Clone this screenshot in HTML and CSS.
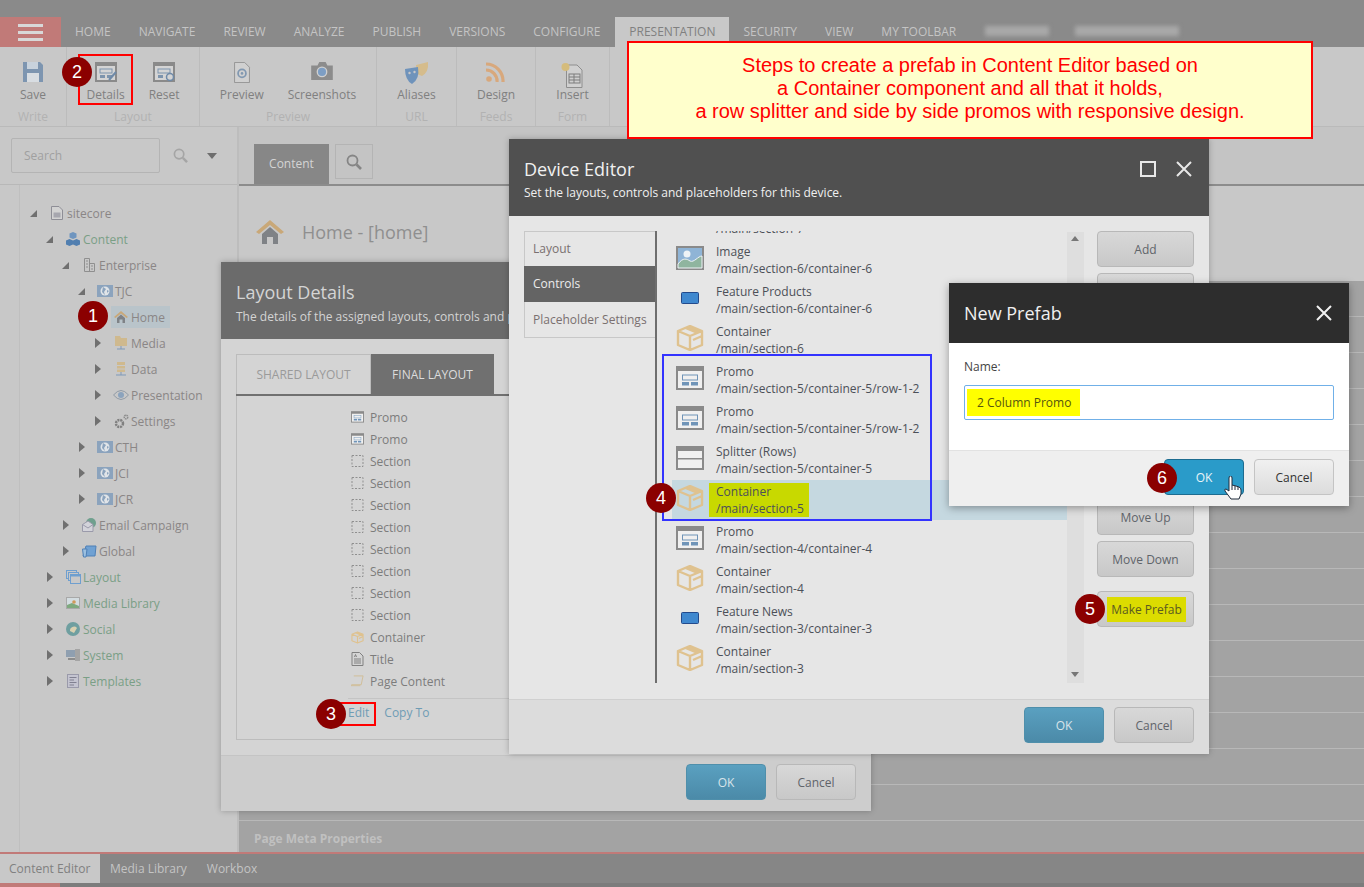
FILE: index.html
```html
<!DOCTYPE html>
<html>
<head>
  <title>Content Editor</title>
  <link rel="stylesheet" href="styles.css">
</head>
<body>
  <svg class="defs" width="0" height="0">
    <defs>
      <symbol id="i-promo" viewBox="0 0 28 24">
        <rect x="1" y="1" width="26" height="22" fill="#f0f0f0" stroke="#8a8a8a" stroke-width="2"/>
        <rect x="0" y="0" width="28" height="5" fill="#8a8a8a"/>
        <rect x="6.500" y="9" width="15" height="5" fill="none" stroke="#6f94b8" stroke-width="1"/>
        <rect x="6" y="16" width="7" height="3.500" fill="#6f94b8"/>
        <rect x="15" y="16" width="7" height="3.500" fill="#6f94b8"/>
      </symbol>
      <symbol id="i-splitter" viewBox="0 0 28 24">
        <rect x="1" y="1" width="26" height="22" fill="#f0f0f0" stroke="#8a8a8a" stroke-width="2"/>
        <rect x="0" y="0" width="28" height="5" fill="#8a8a8a"/>
        <rect x="2" y="12" width="24" height="1.500" fill="#8a8a8a"/>
      </symbol>
      <symbol id="i-box" viewBox="0 0 28 26">
        <path d="M14 1 L26 6 L14 11 L2 6 Z M2 6 V20 L14 25 L26 20 V6 M14 11 V25 M26 11 L17 15" fill="none" stroke="#dfc28f" stroke-width="2.400" stroke-linejoin="round"/>
        <path d="M14 1 L8 3.500 L20 8.500 L26 6 Z" fill="#dfc28f"/>
      </symbol>
      <symbol id="i-feature" viewBox="0 0 18 12">
        <rect x="0.500" y="0.500" width="17" height="11" rx="1" fill="#3f88cf" stroke="#234a8c"/>
      </symbol>
      <symbol id="i-image" viewBox="0 0 28 24">
        <rect x="1" y="1" width="26" height="22" fill="#8fb4d6" stroke="#8a8a8a" stroke-width="2"/>
        <circle cx="11" cy="8" r="3.500" fill="#eef3f6"/>
        <path d="M2 18 C7 11 11 13 14 15 C18 17 22 10 26 10 V22 H2 Z" fill="#8fb59f" stroke="#eef3f6" stroke-width="1"/>
      </symbol>
      <symbol id="i-section" viewBox="0 0 12 12">
        <rect x="0.500" y="0.500" width="11" height="11" fill="none" stroke="#8f8f8f" stroke-dasharray="2 1.500"/>
      </symbol>
      <symbol id="i-file" viewBox="0 0 12 14">
        <path d="M0.500 0.500 H8 L11.500 4 V13.500 H0.500 Z" fill="#d2d2d2" stroke="#8e8e96"/>
        <rect x="2.500" y="6.500" width="7" height="5" fill="#a6a6ae"/>
      </symbol>
      <symbol id="i-title" viewBox="0 0 12 14">
        <path d="M0.500 0.500 H8 L11.500 4 V13.500 H0.500 Z" fill="none" stroke="#808080"/>
        <path d="M2.500 7 H9.500 M2.500 9 H9.500 M2.500 11 H9.500 M3 5 L4 2.500 L5 5" fill="none" stroke="#808080"/>
      </symbol>
      <symbol id="i-scroll" viewBox="0 0 14 12">
        <path d="M3 .5 H13 L11 10 H1 Q0 10 0 11 H10" fill="none" stroke="#d0bd96"/>
      </symbol>
      <symbol id="i-cubes" viewBox="0 0 14 14">
        <path d="M7 0 L10.500 1.500 V5.500 L7 7 L3.500 5.500 V1.500 Z" fill="#6f95bf"/>
        <path d="M3.500 7 L7 8.500 V12.500 L3.500 14 L0 12.500 V8.500 Z M10.500 7 L14 8.500 V12.500 L10.500 14 L7 12.500 V8.500 Z" fill="#517fb0"/>
      </symbol>
      <symbol id="i-building" viewBox="0 0 11 14">
        <path d="M.5 13.500 V.5 H5.500 V13.500 M5.500 5.500 H10.500 V13.500 H.5" fill="none" stroke="#8f8f8f"/>
        <path d="M2 3 H4 M2 6 H4 M2 9 H4 M7 8 H9 M7 11 H9" stroke="#8f8f8f"/>
      </symbol>
      <symbol id="i-site" viewBox="0 0 16 12">
        <rect width="16" height="12" fill="#8ba3bd"/>
        <circle cx="8" cy="6" r="4.500" fill="#e0e4e8"/>
        <path d="M6 2 L9 4 L7 7 L8 10 L5 7 Z M10 5 L12 6 L10 8 Z" fill="#8ba3bd"/>
      </symbol>
      <symbol id="i-home" viewBox="0 0 14 12">
        <path d="M0 6 L7 0 L14 6 L12.500 7 L7 2.500 L1.500 7 Z" fill="#c9a878"/>
        <path d="M3 7 L7 3.500 L11 7 V12 H8.500 V8.500 H5.500 V12 H3 Z" fill="#7f8286"/>
      </symbol>
      <symbol id="i-folder" viewBox="0 0 12 14">
        <path d="M0 0 H5 L6 2 H12 V10 H0 Z" fill="#cfb98e"/>
        <path d="M6 10 V13 M2 13 H10" stroke="#7f99b8"/>
      </symbol>
      <symbol id="i-data" viewBox="0 0 10 14">
        <rect x="1" width="8" height="10" fill="#cfb98e"/>
        <path d="M1 3.500 H9 M1 7 H9" stroke="#c9c9c9"/>
        <path d="M5 10 V13 M0 13 H10" stroke="#7f99b8"/>
      </symbol>
      <symbol id="i-eye" viewBox="0 0 16 12">
        <path d="M.5 6 Q8 -3 15.500 6 Q8 15 .5 6 Z" fill="none" stroke="#8f9aa6"/>
        <circle cx="8" cy="6" r="3" fill="#8ba3bd"/>
      </symbol>
      <symbol id="i-gears" viewBox="0 0 15 15">
        <circle cx="5.500" cy="9.500" r="3.500" fill="none" stroke="#808080" stroke-width="2.500" stroke-dasharray="2 .8"/>
        <circle cx="12" cy="3" r="1.800" fill="none" stroke="#8c8c8c" stroke-width="1.500" stroke-dasharray="1.500 .5"/>
      </symbol>
      <symbol id="i-mail" viewBox="0 0 15 14">
        <circle cx="9" cy="5" r="5" fill="#6fa08e"/>
        <path d="M.5 6.500 L6 3 L11 6.500 V13.500 H.5 Z" fill="#d3d3da" stroke="#9a9aaa"/>
        <path d="M.5 6.500 L6 10 L11 6.500" fill="none" stroke="#9a9aaa"/>
      </symbol>
      <symbol id="i-global" viewBox="0 0 15 14">
        <path d="M4 2 H14 L13 12 H1 Z" fill="#6fa1d3" stroke="#4f80b6"/>
        <path d="M0.500 5 H5 L4 13 H1.500 Z" fill="#9cc0e0" stroke="#4f80b6"/>
      </symbol>
      <symbol id="i-windows" viewBox="0 0 15 14">
        <rect x=".5" y=".5" width="10" height="8" fill="none" stroke="#6f9fcf"/>
        <rect x="2.500" y="2.500" width="10" height="8" fill="#c8c8c8" stroke="#6f9fcf"/>
        <rect x="4.500" y="4.500" width="10" height="9" fill="#c8c8c8" stroke="#6f9fcf"/>
        <rect x="4.500" y="4.500" width="10" height="2" fill="#6f9fcf"/>
      </symbol>
      <symbol id="i-media" viewBox="0 0 14 12">
        <rect width="14" height="12" fill="#a8a8a8"/>
        <rect x="1" y="1" width="12" height="10" fill="#d3dce0"/>
        <path d="M1 11 V8 L6 6 L13 9 V11 Z" fill="#7ea97e"/>
        <circle cx="8" cy="5" r="1.800" fill="#cf9a5a"/>
      </symbol>
      <symbol id="i-social" viewBox="0 0 14 14">
        <circle cx="7" cy="7" r="7" fill="#6f9fa0"/>
        <path d="M4 9 A4 4 0 0 1 11 6 L8 11 Z" fill="#d8d0b0"/>
      </symbol>
      <symbol id="i-system" viewBox="0 0 14 12">
        <rect y="1" width="10" height="7" fill="#8f9fb0"/>
        <rect x="9" width="5" height="12" fill="#a4a4a4"/>
        <path d="M2 10 H9" stroke="#8c8c8c" stroke-width="2"/>
      </symbol>
      <symbol id="i-template" viewBox="0 0 12 14">
        <rect x=".5" y=".5" width="11" height="13" fill="#c4c4d0" stroke="#9a9aaa"/>
        <path d="M2.500 3.500 H9.500 M2.500 6 H7 M2.500 8.500 H9.500 M2.500 11 H7" stroke="#808090"/>
      </symbol>
      <symbol id="i-search" viewBox="0 0 16 16">
        <circle cx="6.500" cy="6.500" r="5" fill="none" stroke="currentColor" stroke-width="1.800"/>
        <path d="M10.500 10.500 L15 15" stroke="currentColor" stroke-width="2.600"/>
      </symbol>
      <symbol id="i-close" viewBox="0 0 16 16">
        <path d="M1 1 L15 15 M15 1 L1 15" stroke="currentColor" stroke-width="2"/>
      </symbol>
    </defs>
  </svg>

  <div class="page">
    <div class="topbar"></div>
    <div class="tabbar">
      <div class="burger"><i></i><i></i><i></i></div>
      <span class="tab">Home</span>
      <span class="tab">Navigate</span>
      <span class="tab">Review</span>
      <span class="tab">Analyze</span>
      <span class="tab">Publish</span>
      <span class="tab">Versions</span>
      <span class="tab">Configure</span>
      <span class="tab active">Presentation</span>
      <span class="tab">Security</span>
      <span class="tab">View</span>
      <span class="tab">My Toolbar</span>
      <span class="blur blur-a"></span>
      <span class="blur blur-b"></span>
    </div>

    <div class="ribbon">
      <div class="group g-write">
        <div class="cmds">
          <div class="cmd">
            <svg width="20" height="20" viewBox="0 0 20 20"><path d="M0 0 H17 L20 3 V20 H0 Z" fill="#7d95b0"/><rect x="4" y="0" width="11" height="7" fill="#c8d2dc"/><rect x="4" y="11" width="12" height="9" fill="#d8dde2"/></svg>
            <span>Save</span>
          </div>
        </div>
        <div class="group-name">Write</div>
      </div>
      <div class="group g-layout">
        <div class="cmds">
          <div class="cmd">
            <svg width="22" height="20" viewBox="0 0 22 20"><rect x="1" y="1" width="20" height="18" fill="#d4d4d4" stroke="#8a8a8a" stroke-width="2"/><rect width="22" height="4" fill="#8a8a8a"/><rect x="5" y="7" width="12" height="4" fill="none" stroke="#7d94ad"/><rect x="5" y="13" width="5" height="3" fill="#7d94ad"/><rect x="12" y="13" width="5" height="3" fill="#7d94ad"/><path d="M14 18 L21 10" stroke="#6f8aa8" stroke-width="2"/></svg>
            <span>Details</span>
          </div>
          <div class="cmd">
            <svg width="22" height="20" viewBox="0 0 22 20"><rect x="1" y="1" width="20" height="18" fill="#d4d4d4" stroke="#8a8a8a" stroke-width="2"/><rect width="22" height="4" fill="#8a8a8a"/><rect x="5" y="7" width="12" height="4" fill="none" stroke="#7d94ad"/><rect x="5" y="13" width="5" height="3" fill="#7d94ad"/><circle cx="17" cy="15" r="3.500" fill="none" stroke="#6f8aa8" stroke-width="1.500"/></svg>
            <span>Reset</span>
          </div>
        </div>
        <div class="group-name">Layout</div>
      </div>
      <div class="group g-preview">
        <div class="cmds">
          <div class="cmd">
            <svg width="18" height="21" viewBox="0 0 18 24"><path d="M.5 .5 H12 L17.500 6 V23.500 H.5 Z" fill="#d0d0d0" stroke="#8e8e8e"/><circle cx="9" cy="13" r="4.500" fill="none" stroke="#8198b1" stroke-width="2"/><circle cx="9" cy="13" r="1.500" fill="#8198b1"/></svg>
            <span>Preview</span>
          </div>
          <div class="cmd">
            <svg width="22" height="18" viewBox="0 0 24 20"><path d="M0 4 H7 L9 0 H16 L18 4 H24 V20 H0 Z" fill="#8c8c8c"/><circle cx="12" cy="11" r="6" fill="#d0d0d0"/><circle cx="12" cy="11" r="4.500" fill="#7d9ec4"/></svg>
            <span>Screenshots</span>
          </div>
        </div>
        <div class="group-name">Preview</div>
      </div>
      <div class="group g-url">
        <div class="cmds">
          <div class="cmd">
            <svg width="24" height="24" viewBox="0 0 24 24"><path d="M11 3 L23 0 Q24 10 17 14 L12 12 Z" fill="#d5bc8c"/><path d="M0 7 L13 5 Q15 17 7 22 Q0 18 0 7 Z" fill="#6f93bb"/><circle cx="4.500" cy="11" r="1.200" fill="#c8c8c8"/><circle cx="9.500" cy="10" r="1.200" fill="#c8c8c8"/></svg>
            <span>Aliases</span>
          </div>
        </div>
        <div class="group-name">URL</div>
      </div>
      <div class="group g-feeds">
        <div class="cmds">
          <div class="cmd">
            <svg width="19" height="20" viewBox="0 0 19 20"><circle cx="3" cy="17" r="2.800" fill="#d8a87c"/><path d="M0 8 A11 11 0 0 1 11 20 M0 2 A17 17 0 0 1 17 20" fill="none" stroke="#d8a87c" stroke-width="3.200"/></svg>
            <span>Design</span>
          </div>
        </div>
        <div class="group-name">Feeds</div>
      </div>
      <div class="group g-form">
        <div class="cmds">
          <div class="cmd">
            <svg width="22" height="26" viewBox="0 0 22 26"><path d="M5.500 3 H16 L21 8 V25.500 H5.500 Z" fill="#d0d0d0" stroke="#8e8e8e"/><rect x="8" y="12" width="11" height="9" fill="none" stroke="#7d7d7d"/><path d="M8 15 H19 M8 18 H19 M13 12 V21" stroke="#7d7d7d"/><circle cx="4.500" cy="5" r="4" fill="#d5bc7c"/></svg>
            <span>Insert</span>
          </div>
        </div>
        <div class="group-name">Form</div>
      </div>
    </div>

    <div class="main">
      <aside class="side">
        <div class="search-row">
          <div class="search-box">Search</div>
          <svg class="search-ic" width="15" height="15"><use href="#i-search"/></svg>
          <span class="search-arrow"></span>
        </div>
        <div class="tree">
          <div class="node l0"><b class="open"></b><span class="ic"><svg width="12" height="14"><use href="#i-file"/></svg></span>sitecore</div>
          <div class="node l1 root"><b class="open"></b><span class="ic"><svg width="14" height="14"><use href="#i-cubes"/></svg></span>Content</div>
          <div class="node l2"><b class="open"></b><span class="ic"><svg width="11" height="14"><use href="#i-building"/></svg></span>Enterprise</div>
          <div class="node l3"><b class="open"></b><span class="ic"><svg width="16" height="12"><use href="#i-site"/></svg></span>TJC</div>
          <div class="node l4"><b></b><span class="sel"><span class="ic"><svg width="14" height="12"><use href="#i-home"/></svg></span>Home</span></div>
          <div class="node l4"><b class="shut"></b><span class="ic"><svg width="12" height="14"><use href="#i-folder"/></svg></span>Media</div>
          <div class="node l4"><b class="shut"></b><span class="ic"><svg width="10" height="14"><use href="#i-data"/></svg></span>Data</div>
          <div class="node l4"><b class="shut"></b><span class="ic"><svg width="16" height="12"><use href="#i-eye"/></svg></span>Presentation</div>
          <div class="node l4"><b class="shut"></b><span class="ic"><svg width="15" height="15"><use href="#i-gears"/></svg></span>Settings</div>
          <div class="node l3"><b class="shut"></b><span class="ic"><svg width="16" height="12"><use href="#i-site"/></svg></span>CTH</div>
          <div class="node l3"><b class="shut"></b><span class="ic"><svg width="16" height="12"><use href="#i-site"/></svg></span>JCI</div>
          <div class="node l3"><b class="shut"></b><span class="ic"><svg width="16" height="12"><use href="#i-site"/></svg></span>JCR</div>
          <div class="node l2"><b class="shut"></b><span class="ic"><svg width="15" height="14"><use href="#i-mail"/></svg></span>Email Campaign</div>
          <div class="node l2"><b class="shut"></b><span class="ic"><svg width="15" height="14"><use href="#i-global"/></svg></span>Global</div>
          <div class="node l1 root"><b class="shut"></b><span class="ic"><svg width="15" height="14"><use href="#i-windows"/></svg></span>Layout</div>
          <div class="node l1 root"><b class="shut"></b><span class="ic"><svg width="14" height="12"><use href="#i-media"/></svg></span>Media Library</div>
          <div class="node l1 root"><b class="shut"></b><span class="ic"><svg width="14" height="14"><use href="#i-social"/></svg></span>Social</div>
          <div class="node l1 root"><b class="shut"></b><span class="ic"><svg width="14" height="12"><use href="#i-system"/></svg></span>System</div>
          <div class="node l1 root"><b class="shut"></b><span class="ic"><svg width="12" height="14"><use href="#i-template"/></svg></span>Templates</div>
        </div>
      </aside>

      <section class="content">
        <div class="content-tabs">
          <span class="ctab">Content</span>
          <span class="csearch"><svg width="16" height="16"><use href="#i-search"/></svg></span>
        </div>
        <div class="item-head">
          <svg width="28" height="24" viewBox="0 0 14 12"><use href="#i-home"/></svg>
          <span>Home - [home]</span>
        </div>
        <div class="fields"><span>Page Meta Properties</span></div>
      </section>
    </div>

    <div class="bottom">
      <div class="bottom-tabs">
        <span class="btab active">Content Editor</span>
        <span class="btab">Media Library</span>
        <span class="btab">Workbox</span>
      </div>
      <div class="bottom-foot"><i></i></div>
    </div>

    <div class="win layout-win">
      <header class="win-head">
        <h1>Layout Details</h1>
        <p>The details of the assigned layouts, controls and placeholders.</p>
      </header>
      <div class="layout-body">
        <div class="ltabs">
          <span class="ltab">Shared Layout</span>
          <span class="ltab active">Final Layout</span>
        </div>
        <div class="lpane">
          <div class="lrow"><svg width="13" height="12"><use href="#i-promo"/></svg>Promo</div>
          <div class="lrow"><svg width="13" height="12"><use href="#i-promo"/></svg>Promo</div>
          <div class="lrow"><svg width="12" height="12"><use href="#i-section"/></svg>Section</div>
          <div class="lrow"><svg width="12" height="12"><use href="#i-section"/></svg>Section</div>
          <div class="lrow"><svg width="12" height="12"><use href="#i-section"/></svg>Section</div>
          <div class="lrow"><svg width="12" height="12"><use href="#i-section"/></svg>Section</div>
          <div class="lrow"><svg width="12" height="12"><use href="#i-section"/></svg>Section</div>
          <div class="lrow"><svg width="12" height="12"><use href="#i-section"/></svg>Section</div>
          <div class="lrow"><svg width="12" height="12"><use href="#i-section"/></svg>Section</div>
          <div class="lrow"><svg width="12" height="12"><use href="#i-section"/></svg>Section</div>
          <div class="lrow"><svg width="14" height="13"><use href="#i-box"/></svg>Container</div>
          <div class="lrow"><svg width="12" height="14"><use href="#i-title"/></svg>Title</div>
          <div class="lrow"><svg width="14" height="12"><use href="#i-scroll"/></svg>Page Content</div>
          <div class="llinks"><a>Edit</a><a>Copy To</a></div>
        </div>
      </div>
      <footer class="win-foot layout-foot">
        <button class="btn ok dim">OK</button>
        <button class="btn">Cancel</button>
      </footer>
    </div>

    <div class="win device-win">
      <header class="win-head device-head">
        <div>
          <h1>Device Editor</h1>
          <p>Set the layouts, controls and placeholders for this device.</p>
        </div>
        <div class="win-ctl">
          <span class="maxi"></span>
          <svg width="16" height="16"><use href="#i-close"/></svg>
        </div>
      </header>
      <div class="device-body">
        <nav class="dnav">
          <span>Layout</span>
          <span class="active">Controls</span>
          <span>Placeholder Settings</span>
        </nav>
        <div class="dlist">
          <div class="drow cut"><span class="dic"></span><div><b>Container</b><em>/main/section-7</em></div></div>
          <div class="drow"><span class="dic"><svg width="28" height="24"><use href="#i-image"/></svg></span><div><b>Image</b><em>/main/section-6/container-6</em></div></div>
          <div class="drow"><span class="dic"><svg width="18" height="12"><use href="#i-feature"/></svg></span><div><b>Feature Products</b><em>/main/section-6/container-6</em></div></div>
          <div class="drow"><span class="dic"><svg width="28" height="26"><use href="#i-box"/></svg></span><div><b>Container</b><em>/main/section-6</em></div></div>
          <div class="drow"><span class="dic"><svg width="28" height="24"><use href="#i-promo"/></svg></span><div><b>Promo</b><em>/main/section-5/container-5/row-1-2</em></div></div>
          <div class="drow"><span class="dic"><svg width="28" height="24"><use href="#i-promo"/></svg></span><div><b>Promo</b><em>/main/section-5/container-5/row-1-2</em></div></div>
          <div class="drow"><span class="dic"><svg width="28" height="24"><use href="#i-splitter"/></svg></span><div><b>Splitter (Rows)</b><em>/main/section-5/container-5</em></div></div>
          <div class="drow picked"><span class="dic"><svg width="28" height="26"><use href="#i-box"/></svg></span><div class="hl"><b>Container</b><em>/main/section-5</em></div></div>
          <div class="drow"><span class="dic"><svg width="28" height="24"><use href="#i-promo"/></svg></span><div><b>Promo</b><em>/main/section-4/container-4</em></div></div>
          <div class="drow"><span class="dic"><svg width="28" height="26"><use href="#i-box"/></svg></span><div><b>Container</b><em>/main/section-4</em></div></div>
          <div class="drow"><span class="dic"><svg width="18" height="12"><use href="#i-feature"/></svg></span><div><b>Feature News</b><em>/main/section-3/container-3</em></div></div>
          <div class="drow"><span class="dic"><svg width="28" height="26"><use href="#i-box"/></svg></span><div><b>Container</b><em>/main/section-3</em></div></div>
        </div>
        <div class="scrollbar"><i class="up"></i><i class="down"></i></div>
        <div class="dbtns">
          <button class="btn">Add</button>
          <button class="btn">Properties</button>
          <button class="btn push">Move Up</button>
          <button class="btn">Move Down</button>
          <button class="btn prefab"><span>Make Prefab</span></button>
        </div>
      </div>
      <footer class="win-foot device-foot">
        <button class="btn ok dim">OK</button>
        <button class="btn">Cancel</button>
      </footer>
    </div>

    <div class="win prefab-win">
      <header class="prefab-head">
        <h1>New Prefab</h1>
        <svg width="16" height="16"><use href="#i-close"/></svg>
      </header>
      <div class="prefab-body">
        <label>Name:</label>
        <div class="name-input"><span>2 Column Promo</span></div>
      </div>
      <footer class="win-foot prefab-foot">
        <button class="btn ok">OK</button>
        <button class="btn light">Cancel</button>
      </footer>
    </div>

    <div class="note">
      Steps to create a prefab in Content Editor based on<br>
      a Container component and all that it holds,<br>
      a row splitter and side by side promos with responsive design.
    </div>

    <div class="redbox box-details"></div>
    <div class="redbox box-edit"></div>
    <div class="bluebox"></div>

    <span class="step s1">1</span>
    <span class="step s2">2</span>
    <span class="step s3">3</span>
    <span class="step s4">4</span>
    <span class="step s5">5</span>
    <span class="step s6">6</span>

    <svg class="hand" width="18" height="24" viewBox="0 0 18 24"><path d="M5 2 Q5 0 6.500 0 Q8 0 8 2 V9 L10 9.500 L12 10 L15 11 Q17 12 17 14 V18 L15 23 H7 L1 15 Q0 13 2 13 L5 15 Z" fill="#fff" stroke="#1f2a3a"/><path d="M8 9 V14 M11 10 V14 M14 11 V14" stroke="#1f2a3a"/></svg>
  </div>
</body>
</html>
```

FILE: styles.css
```css
* {
  box-sizing: border-box;
}

html, body {
  margin: 0;
  padding: 0;
}

body {
  font-family: "Open Sans", sans-serif;
  font-size: 12px;
  color: #808080;
}

.defs {
  position: absolute;
}

.page {
  position: relative;
  width: 1364px;
  height: 887px;
  overflow: hidden;
  display: flex;
  flex-direction: column;
  background: #c8c8c8;
}

/* top */
.topbar {
  height: 17px;
  background: #8a8a8a;
}

.tabbar {
  height: 30px;
  display: flex;
  align-items: stretch;
  background: #8a8a8a;
  color: #c4c4c4;
}

.burger {
  width: 61px;
  background: #c17a78;
  display: flex;
  flex-direction: column;
  justify-content: center;
  align-items: center;
  gap: 4px;
}

.burger i {
  display: block;
  width: 25px;
  height: 3px;
  background: #d8d8d8;
}

.tab {
  padding: 0 14px;
  line-height: 30px;
  text-transform: uppercase;
}

.tab.active {
  margin-left: 1px;
  background: #c8c8c8;
  color: #808080;
}

.blur {
  height: 10px;
  margin-top: 9px;
  background: #a8a8a8;
  filter: blur(2px);
}

.blur-a {
  width: 64px;
  margin-left: 15px;
}

.blur-b {
  width: 104px;
  margin-left: 26px;
}

.ribbon {
  height: 80px;
  display: flex;
  background: #c8c8c8;
  border-bottom: 1px solid #bababa;
}

.group {
  border-right: 1px solid #bcbcbc;
  display: flex;
  flex-direction: column;
}

.g-write { width: 67px; }
.g-layout { width: 133px; }
.g-preview { width: 177px; }
.g-url { width: 80px; }
.g-feeds { width: 79px; }
.g-form { width: 74px; }

.cmds {
  flex: 1;
  display: flex;
  justify-content: center;
  gap: 24px;
  padding-top: 14px;
}

.cmd {
  position: relative;
  display: flex;
  flex-direction: column;
  align-items: center;
  height: 44px;
  justify-content: flex-end;
  padding-bottom: 2px;
}

.cmd svg {
  position: absolute;
  top: 1px;
}

.group-name {
  height: 18px;
  text-align: center;
  color: #b2b2b2;
}

.main {
  flex: 1;
  display: flex;
  min-height: 0;
}

/* tree */
.side {
  width: 239px;
  background: #c8c8c8;
  border-right: 2px solid #bdbdbd;
  display: flex;
  flex-direction: column;
}

.search-row {
  height: 58px;
  padding: 11px 0 0 11px;
  border-bottom: 1px solid #b8b8b8;
  display: flex;
  align-items: flex-start;
}

.search-box {
  width: 149px;
  height: 35px;
  border: 1px solid #b4b4b4;
  border-radius: 2px;
  padding-left: 12px;
  line-height: 33px;
  color: #a0a0a0;
}

.search-ic {
  margin: 10px 0 0 13px;
  color: #a5a5a5;
}

.search-arrow {
  margin: 15px 0 0 19px;
  border: 5px solid transparent;
  border-top: 6px solid #6e6e6e;
  border-bottom: 0;
}

.tree {
  flex: 1;
  padding-top: 15px;
  margin-left: 19px;
  border-left: 1px solid #bfbfbf;
}

.node {
  height: 26px;
  display: flex;
  align-items: center;
  font-size: 12px;
  color: #8a8686;
}

.node.root {
  color: #7a9f86;
}

.node.l0 { padding-left: 7px; }
.node.l1 { padding-left: 23px; }
.node.l2 { padding-left: 39px; }
.node.l3 { padding-left: 55px; }
.node.l4 { padding-left: 71px; }

.node b {
  flex: none;
  width: 20px;
  display: block;
}

.node b.open::before {
  content: "";
  display: block;
  width: 0;
  height: 0;
  margin-left: 3px;
  border-left: 7px solid transparent;
  border-bottom: 7px solid #707070;
}

.node b.shut::before {
  content: "";
  display: block;
  width: 0;
  height: 0;
  margin-left: 4px;
  border-top: 5px solid transparent;
  border-bottom: 5px solid transparent;
  border-left: 6px solid #707070;
}

.ic {
  flex: none;
  width: 20px;
  display: flex;
  justify-content: center;
}

.sel {
  display: flex;
  align-items: center;
  height: 22px;
  padding-right: 5px;
  background: #b9c4ca;
}

/* content */
.content {
  flex: 1;
  display: flex;
  flex-direction: column;
  background: #c8c8c8;
}

.content-tabs {
  height: 59px;
  padding: 17px 0 0 15px;
  display: flex;
  gap: 6px;
  border-bottom: 2px solid #8c8c8c;
  background: #c4c4c4;
}

.ctab {
  width: 75px;
  height: 40px;
  background: #878787;
  color: #d4d4d4;
  text-align: center;
  line-height: 40px;
}

.csearch {
  width: 38px;
  height: 35px;
  border: 1px solid #b4b4b4;
  color: #858585;
  display: flex;
  align-items: center;
  justify-content: center;
}

.item-head {
  height: 95px;
  padding: 34px 0 0 17px;
  display: flex;
  align-items: flex-start;
  gap: 18px;
  font-size: 18px;
  color: #8f8f8f;
}

.fields {
  flex: 1;
  display: flex;
  align-items: flex-end;
  padding: 0 0 5px 15px;
  font-weight: 700;
  color: #c0c0c0;
  background: repeating-linear-gradient(#a3a3a3 0, #a3a3a3 35px, #b8b8b8 35px, #b8b8b8 36px);
}

/* bottom */
.bottom {
  height: 35px;
  background: #868686;
  border-top: 2px solid #c17a78;
  display: flex;
  flex-direction: column;
}

.bottom-tabs {
  height: 29px;
  display: flex;
}

.btab {
  padding: 0 10px;
  line-height: 29px;
  color: #c4c4c4;
}

.btab.active {
  width: 100px;
  padding: 0 0 0 9px;
  background: #c8c8c8;
  color: #808080;
}

.bottom-foot {
  flex: 1;
  background: #7c7c7c;
}

.bottom-foot i {
  display: block;
  width: 60px;
  height: 100%;
  background: #c17a78;
}

/* windows */
.win {
  position: absolute;
  display: flex;
  flex-direction: column;
  box-shadow: 0 0 6px rgba(0, 0, 0, 0.25);
}

.win-head h1 {
  margin: 0;
  font-size: 18px;
  font-weight: 400;
}

.win-head p {
  margin: 3px 0 0;
  font-size: 12px;
}

.win-foot {
  display: flex;
  justify-content: flex-end;
  gap: 10px;
}

.btn {
  width: 80px;
  height: 36px;
  padding: 0;
  font: 12px "Open Sans", sans-serif;
  color: #60646a;
  border: 1px solid #b8b8b8;
  border-radius: 4px;
  background: linear-gradient(#d8d8d8, #c8c8c8);
}

.btn.light {
  background: linear-gradient(#f0f0f0, #dcdcdc);
  border-color: #c4c4c4;
  color: #333;
}

.btn.ok {
  border-color: #1d6c90;
  background: #2a9bc9;
  color: #e8f4f8;
}

.btn.ok.dim {
  border-color: #4f8fab;
  background: linear-gradient(#5aa0c0, #4b8aa8);
  color: #d8e4ea;
}

.layout-win {
  left: 221px;
  top: 262px;
  width: 650px;
  height: 549px;
  background: #d4d4d4;
}

.layout-win .win-head {
  height: 77px;
  padding: 18px 15px 0;
  background: #6b6b6b;
  color: #d4d4d4;
}

.layout-win .win-head p {
  margin-top: 4px;
}

.layout-body {
  height: 416px;
  padding: 15px;
}

.ltabs {
  height: 42px;
  display: flex;
  border-bottom: 2px solid #707070;
}

.ltab {
  width: 135px;
  line-height: 40px;
  text-align: center;
  text-transform: uppercase;
  color: #9a9a9a;
  border: 1px solid #bcbcbc;
  border-bottom: 0;
}

.ltab.active {
  width: 123px;
  border: 0;
  line-height: 41px;
  background: #707070;
  color: #dcdcdc;
}

.lpane {
  height: 344px;
  padding: 10px 0 0 114px;
  border: 1px solid #bcbcbc;
  border-top: 0;
}

.lrow {
  height: 22px;
  display: flex;
  align-items: center;
  gap: 6px;
  color: #7c7c7c;
}

.lrow svg {
  flex: none;
  width: 13px;
}

.llinks {
  margin: 6px 0 0 -3px;
  padding-top: 4px;
  border-top: 1px solid #c4c4c4;
  display: flex;
  gap: 15px;
  line-height: 20px;
  color: #6f9cb4;
}

.layout-foot {
  flex: 1;
  padding: 8px 15px 0;
  background: #cdcdcd;
  border-top: 1px solid #c4c4c4;
}

.device-win {
  left: 509px;
  top: 139px;
  width: 700px;
  height: 615px;
  background: #e6e6e6;
}

.device-head {
  height: 77px;
  padding: 18px 17px 0 15px;
  display: flex;
  justify-content: space-between;
  background: #505050;
  color: #f0f0f0;
}

.win-ctl {
  display: flex;
  gap: 20px;
  padding-top: 4px;
  color: #e8e8e8;
}

.maxi {
  width: 16px;
  height: 16px;
  border: 2px solid #e8e8e8;
}

.device-body {
  height: 483px;
  padding: 15px 15px 0;
  display: flex;
  align-items: flex-start;
}

.dnav {
  width: 131px;
  display: flex;
  flex-direction: column;
  border: 1px solid #c8c8c8;
  border-right: 0;
  color: #7a7070;
}

.dnav span {
  height: 35px;
  line-height: 35px;
  padding-left: 8px;
}

.dnav span:first-child {
  height: 34px;
  line-height: 34px;
}

.dnav .active {
  height: 36px;
  margin-left: -1px;
  padding-left: 9px;
  line-height: 36px;
  background: #646464;
  color: #ececec;
}

.dlist {
  width: 412px;
  height: 452px;
  overflow: hidden;
  padding-top: 1px;
  border-left: 2px solid #6e6e6e;
}

.drow {
  height: 40px;
  padding-top: 3px;
  padding-left: 19px;
  display: flex;
  align-items: flex-start;
  color: #4c5058;
}

.drow.cut {
  margin-top: -32px;
}

.drow b,
.drow em {
  display: block;
  font-weight: 400;
  font-style: normal;
  line-height: 17px;
}

.dic {
  flex: none;
  width: 28px;
  height: 30px;
  margin-right: 12px;
  display: flex;
  align-items: center;
  justify-content: center;
}

.drow.picked {
  margin-left: 15px;
  padding-left: 4px;
  background: #c5d8e0;
}

.hl {
  margin-left: -7px;
  padding: 0 3px 0 7px;
  background: #c8d900;
  height: 34px;
  width: 100px;
}

.scrollbar {
  position: relative;
  width: 17px;
  height: 451px;
  margin-top: 1px;
  background: #dedede;
}

.scrollbar i {
  position: absolute;
  left: 4px;
  border: 4px solid transparent;
}

.scrollbar .up {
  top: 4px;
  border-bottom: 5px solid #777;
  border-top: 0;
}

.scrollbar .down {
  bottom: 6px;
  border-top: 5px solid #777;
  border-bottom: 0;
}

.dbtns {
  width: 97px;
  height: 396px;
  margin-left: 13px;
  display: flex;
  flex-direction: column;
  gap: 6px;
}

.dbtns .btn {
  width: 97px;
  flex: none;
}

.dbtns .push {
  margin-top: auto;
}

.dbtns .prefab {
  margin-top: 8px;
  padding-left: 2px;
}

.prefab span {
  display: inline-block;
  padding: 0 4px;
  line-height: 25px;
  background: #dcdc00;
  color: #5a5a20;
}

.device-foot {
  flex: 1;
  padding: 7px 15px 0;
  background: #dcdcdc;
  border-top: 1px solid #d0d0d0;
}

.prefab-win {
  left: 949px;
  top: 283px;
  width: 400px;
  height: 223px;
  background: #fff;
  box-shadow: 0 2px 8px rgba(0, 0, 0, 0.35);
}

.prefab-head {
  height: 60px;
  padding: 0 17px 0 15px;
  display: flex;
  align-items: center;
  justify-content: space-between;
  background: #2d2d2d;
  color: #f0f0f0;
}

.prefab-head h1 {
  margin: 0;
  font-size: 18px;
  font-weight: 400;
}

.prefab-body {
  height: 107px;
  padding: 15px 15px 0;
  color: #444;
}

.prefab-body label {
  display: block;
  line-height: 18px;
}

.name-input {
  height: 35px;
  margin-top: 9px;
  padding: 3px 0 0 2px;
  border: 1px solid #70b0e8;
  border-radius: 2px;
}

.name-input span {
  display: block;
  width: 113px;
  height: 27px;
  padding-left: 10px;
  line-height: 27px;
  background: #ffff00;
  color: #555510;
}

.prefab-foot {
  flex: 1;
  padding: 8px 15px 0;
  background: #efefef;
  border-top: 1px solid #e2e2e2;
}

/* annotations */
.note {
  position: absolute;
  left: 627px;
  top: 41px;
  width: 686px;
  height: 98px;
  padding-top: 11px;
  border: 2px solid #ff0000;
  background: #ffffcc;
  color: #ff0000;
  font: 20px/23px "Liberation Sans", sans-serif;
  text-align: center;
}

.redbox {
  position: absolute;
  border: 2px solid #ff0000;
}

.box-details {
  left: 78px;
  top: 54px;
  width: 55px;
  height: 51px;
}

.box-edit {
  left: 340px;
  top: 702px;
  width: 36px;
  height: 24px;
}

.bluebox {
  position: absolute;
  left: 662px;
  top: 354px;
  width: 270px;
  height: 167px;
  border: 2px solid #3333ff;
}

.step {
  position: absolute;
  width: 30px;
  height: 30px;
  border-radius: 50%;
  background: #8b0000;
  color: #fff;
  font: 18px/30px "Liberation Sans", sans-serif;
  text-align: center;
}

.s1 { left: 78px; top: 301px; }
.s2 { left: 62px; top: 57px; }
.s3 { left: 316px; top: 699px; }
.s4 { left: 646px; top: 483px; }
.s5 { left: 1075px; top: 594px; }
.s6 { left: 1147px; top: 463px; }

.hand {
  position: absolute;
  left: 1224px;
  top: 476px;
}
```
